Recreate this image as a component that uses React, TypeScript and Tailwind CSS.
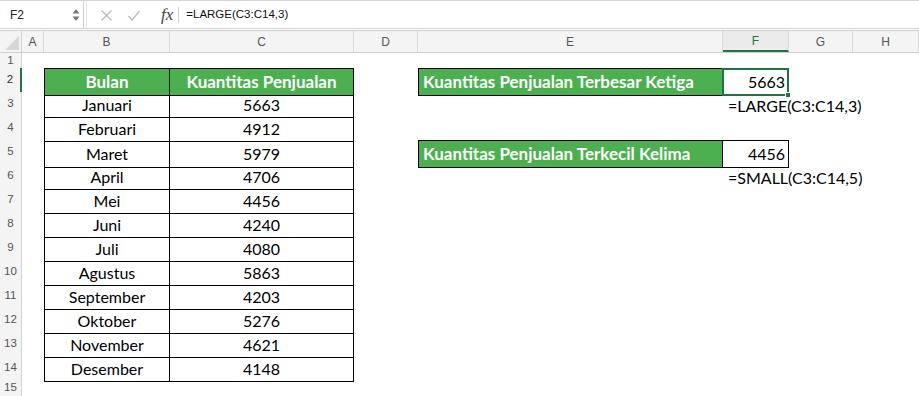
import React from "react";

const COLS = "grid-cols-[22px_22px_126px_184px_64px_305px_66px_64px_66px]";
const letters = ["A", "B", "C", "D", "E", "F", "G", "H"];

const data: [string, string][] = [
  ["Januari", "5663"],
  ["Februari", "4912"],
  ["Maret", "5979"],
  ["April", "4706"],
  ["Mei", "4456"],
  ["Juni", "4240"],
  ["Juli", "4080"],
  ["Agustus", "5863"],
  ["September", "4203"],
  ["Oktober", "5276"],
  ["November", "4621"],
  ["Desember", "4148"],
];

const cellFont = { fontFamily: "Lato, 'Open Sans', sans-serif" };

function FormulaBar() {
  return (
    <div
      className="h-[29px] border-t border-b border-[#d4d4d4] flex items-center bg-white text-[#222]"
      style={{ fontFamily: "'Liberation Sans', Arial, sans-serif" }}
    >
      <div className="w-[84px] h-full flex items-center justify-between pl-[10px] pr-[3px] pt-[1px] border-r border-[#d0d0d0]">
        <span className="text-[12px]">F2</span>
        <svg width="8" height="16" viewBox="0 0 8 16">
          <path d="M4 2 L7.5 6.5 L0.5 6.5 Z" fill="#7a7a7a" />
          <path d="M4 14 L7.5 9.5 L0.5 9.5 Z" fill="#7a7a7a" />
        </svg>
      </div>
      <div className="w-[3px] h-full border-r border-[#e4e4e4]" />
      <div className="flex items-center h-full pt-[1px]">
        <svg width="11" height="11" viewBox="0 0 11 11" className="ml-[14px]">
          <path d="M0.5 0.5 L10.5 10.5 M10.5 0.5 L0.5 10.5" stroke="#b8b8b8" strokeWidth="1.2" />
        </svg>
        <svg width="12" height="11" viewBox="0 0 12 11" className="ml-[16px]">
          <path d="M0.5 6 L4 10 L11.5 1" stroke="#b8b8b8" strokeWidth="1.2" fill="none" />
        </svg>
        <span
          className="ml-[21px] text-[17px] italic text-[#444]"
          style={{ fontFamily: "'Liberation Serif', 'Times New Roman', serif" }}
        >
          fx
        </span>
        <div className="ml-[5px] w-px h-[16px] bg-[#d0d0d0]" />
        <span className="ml-[7px] text-[11.5px] text-[#111]">=LARGE(C3:C14,3)</span>
      </div>
    </div>
  );
}

function ColumnHeader() {
  return (
    <div
      className={`grid ${COLS} h-[23px] border-t border-b border-[#cfcfcf] bg-[#f4f4f4]`}
      style={{ fontFamily: "'Liberation Sans', Arial, sans-serif" }}
    >
      <div className="border-r border-[#d4d4d4] relative">
        <svg width="14" height="14" viewBox="0 0 14 14" className="absolute right-[2px] bottom-[2px]">
          <path d="M14 0 L14 14 L0 14 Z" fill="#d6d6d6" />
        </svg>
      </div>
      {letters.map((l) => (
        <div
          key={l}
          className={`flex items-center justify-center text-[12px] border-r border-[#dadada] ${
            l === "F"
              ? "text-[#217346] bg-[#ebebeb] border-b-2 border-b-[#217346]"
              : "text-[#555]"
          }`}
        >
          {l}
        </div>
      ))}
    </div>
  );
}

function RowHeader({ n, h }: { n: number; h: number }) {
  return (
    <div
      className={`flex items-center justify-center text-[11.5px] border-r bg-[#f4f4f4] ${
        n === 2 ? "border-r-2 border-r-[#217346] text-[#333]" : "border-[#d4d4d4] text-[#555]"
      }`}
      style={{ fontFamily: "'Liberation Sans', Arial, sans-serif", height: h }}
    >
      {n}
    </div>
  );
}

function Row({ n }: { n: number }) {
  const h = n === 1 ? 15 : n === 15 ? 16 : 24;
  const inTable = n >= 2 && n <= 14;
  const isHead = n === 2;
  const rec = inTable && !isHead ? data[n - 3] : null;

  const tCell = (first: boolean) =>
    `flex items-center justify-center border-black border-b border-r ${first ? "border-l" : ""} ${
      isHead ? "border-t bg-[#4caf50] text-white font-bold text-[17px]" : "text-black text-[16px] pt-[1px]"
    }`;

  const renderE = () => {
    if (n === 2 || n === 5) {
      return (
        <div className="flex items-center pl-[4px] border border-black bg-[#4caf50] text-white font-bold text-[17px] whitespace-nowrap">
          {n === 2 ? "Kuantitas Penjualan Terbesar Ketiga" : "Kuantitas Penjualan Terkecil Kelima"}
        </div>
      );
    }
    return <div />;
  };

  const renderF = () => {
    if (n === 2 || n === 5) {
      return (
        <div className="relative flex items-center justify-end pr-[3px] border-t border-b border-r border-black text-[16px] text-black">
          {n === 2 ? "5663" : "4456"}
          {n === 2 && (
            <>
              <div className="absolute -top-px -left-px -right-px -bottom-px border-2 border-[#217346]" />
              <div className="absolute -right-[3px] -bottom-[3px] w-[6px] h-[6px] bg-[#217346] border border-white" />
            </>
          )}
        </div>
      );
    }
    if (n === 3 || n === 6) {
      return (
        <div className="flex items-center pl-[5px] pt-[1px] whitespace-nowrap overflow-visible text-[16px] text-black">
          {n === 3 ? "=LARGE(C3:C14,3)" : "=SMALL(C3:C14,5)"}
        </div>
      );
    }
    return <div />;
  };

  return (
    <div className={`grid ${COLS}`} style={{ ...cellFont, height: h }}>
      <RowHeader n={n} h={h} />
      <div />
      {inTable ? <div className={tCell(true)}>{isHead ? "Bulan" : rec![0]}</div> : <div />}
      {inTable ? (
        <div className={tCell(false)}>{isHead ? "Kuantitas Penjualan" : rec![1]}</div>
      ) : (
        <div />
      )}
      <div />
      {renderE()}
      {renderF()}
      <div />
      <div />
    </div>
  );
}

export default function App() {
  return (
    <div className="w-[919px] h-[396px] overflow-hidden bg-white">
      <FormulaBar />
      <div className="h-px bg-white" />
      <ColumnHeader />
      {Array.from({ length: 15 }, (_, i) => (
        <Row key={i + 1} n={i + 1} />
      ))}
    </div>
  );
}
